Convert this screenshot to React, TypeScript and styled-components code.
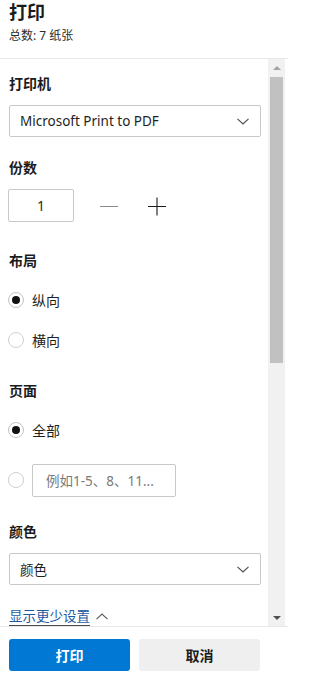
import React from 'react';
import styled, { createGlobalStyle } from 'styled-components';

const GlobalStyle = createGlobalStyle`
  html, body {
    margin: 0;
    padding: 0;
    background: #ffffff;
  }
  body {
    font-family: "Noto Sans", "Noto Sans CJK SC", sans-serif;
    color: #1b1b1b;
  }
  * {
    box-sizing: border-box;
  }
`;

const ChevronDown = () => (
  <svg width="12" height="7" viewBox="0 0 12 7" fill="none">
    <path d="M0.5 0.8 L6 6 L11.5 0.8" stroke="#4a4a4a" strokeWidth="1.1" />
  </svg>
);

const ChevronUp = () => (
  <svg width="12" height="7" viewBox="0 0 12 7" fill="none">
    <path d="M0.5 6.2 L6 1 L11.5 6.2" stroke="#5a5a5a" strokeWidth="1.1" />
  </svg>
);

const MinusIcon = () => (
  <svg width="20" height="20" viewBox="0 0 20 20" fill="none">
    <path d="M1 10.5 H19" stroke="#8a8a8a" strokeWidth="1" />
  </svg>
);

const PlusIcon = () => (
  <svg width="20" height="20" viewBox="0 0 20 20" fill="none">
    <path d="M1 10.5 H19 M10 1.5 V19.5" stroke="#1b1b1b" strokeWidth="1.1" />
  </svg>
);

interface SectionProps {
  title: string;
  top: number;
  children: React.ReactNode;
}

const Section: React.FC<SectionProps> = ({ title, top, children }) => (
  <SectionBox $top={top}>
    <SectionLabel>{title}</SectionLabel>
    {children}
  </SectionBox>
);

const Select: React.FC<{ value: string }> = ({ value }) => (
  <SelectBox>
    <SelectText>{value}</SelectText>
    <ChevronDown />
  </SelectBox>
);

const Radio: React.FC<{ checked?: boolean }> = ({ checked }) => (
  <RadioCircle $checked={!!checked}>{checked && <RadioDot />}</RadioCircle>
);

export default function App() {
  return (
    <>
      <GlobalStyle />
      <Panel>
        <Header>
          <Title>打印</Title>
          <Subtitle>总数: 7 纸张</Subtitle>
        </Header>

        <Body>
          <Content>
            <Section title="打印机" top={15}>
              <Select value="Microsoft Print to PDF" />
            </Section>

            <Section title="份数" top={21}>
              <Stepper>
                <CountInput>1</CountInput>
                <IconButton $first>
                  <MinusIcon />
                </IconButton>
                <IconButton>
                  <PlusIcon />
                </IconButton>
              </Stepper>
            </Section>

            <Section title="布局" top={29}>
              <RadioGroup>
                <RadioRow>
                  <Radio checked />
                  <RadioText>纵向</RadioText>
                </RadioRow>
                <RadioRow>
                  <Radio />
                  <RadioText>横向</RadioText>
                </RadioRow>
              </RadioGroup>
            </Section>

            <Section title="页面" top={23}>
              <RadioGroup>
                <RadioRow>
                  <Radio checked />
                  <RadioText>全部</RadioText>
                </RadioRow>
                <RadioRow $spaced>
                  <Radio />
                  <RangeInput>例如1-5、8、11...</RangeInput>
                </RadioRow>
              </RadioGroup>
            </Section>

            <Section title="颜色" top={24}>
              <Select value="颜色" />
            </Section>

            <MoreLink>
              <LinkText>显示更少设置</LinkText>
              <ChevronUp />
            </MoreLink>
          </Content>

          <ScrollBar>
            <ScrollButton>
              <ArrowUp />
            </ScrollButton>
            <ScrollTrack>
              <ScrollThumb />
            </ScrollTrack>
            <ScrollButton>
              <ArrowDown />
            </ScrollButton>
          </ScrollBar>
        </Body>

        <Footer>
          <PrimaryButton>打印</PrimaryButton>
          <SecondaryButton>取消</SecondaryButton>
        </Footer>
      </Panel>
    </>
  );
}

const Panel = styled.div`
  width: 288px;
  height: 680px;
  display: flex;
  flex-direction: column;
  background: #ffffff;
  overflow: hidden;
`;

const Header = styled.div`
  height: 59px;
  flex-shrink: 0;
  padding-left: 9px;
  border-bottom: 1px solid #e8e8e8;
`;

const Title = styled.div`
  font-size: 18px;
  font-weight: 700;
  line-height: 24px;
`;

const Subtitle = styled.div`
  margin-top: 4px;
  font-size: 12px;
  line-height: 16px;
  color: #2b2b2b;
`;

const Body = styled.div`
  flex: 1;
  min-height: 0;
  display: flex;
  flex-direction: row;
  padding-right: 3px;
`;

const Content = styled.div`
  flex: 1;
  min-width: 0;
  overflow: hidden;
  padding: 0 7px 0 9px;
`;

const SectionBox = styled.div<{ $top: number }>`
  display: flex;
  flex-direction: column;
  gap: 11px;
  margin-top: ${({ $top }) => $top}px;
`;

const SectionLabel = styled.div`
  font-size: 14px;
  font-weight: 700;
  line-height: 20px;
`;

const SelectBox = styled.div`
  height: 32px;
  display: flex;
  align-items: center;
  justify-content: space-between;
  padding: 0 11px 0 10px;
  border: 1px solid #c9c9c9;
  border-radius: 2px;
  flex-shrink: 0;
`;

const SelectText = styled.span`
  font-size: 13.5px;
  color: #1f1f1f;
  white-space: nowrap;
`;

const Stepper = styled.div`
  display: flex;
  align-items: center;
  margin-left: -1px;
`;

const CountInput = styled.div`
  width: 66px;
  height: 33px;
  display: flex;
  align-items: center;
  justify-content: center;
  border: 1px solid #c9c9c9;
  border-radius: 2px;
  font-size: 14px;
  color: #2b2b2b;
`;

const IconButton = styled.div<{ $first?: boolean }>`
  width: 48px;
  height: 32px;
  display: flex;
  align-items: center;
  justify-content: center;
  margin-left: ${({ $first }) => ($first ? '11px' : '0')};
`;

const RadioGroup = styled.div`
  display: flex;
  flex-direction: column;
  gap: 4px;
`;

const RadioRow = styled.div<{ $spaced?: boolean }>`
  height: 36px;
  display: flex;
  align-items: center;
  gap: 8px;
  margin-top: ${({ $spaced }) => ($spaced ? '10px' : '0')};
  margin-left: -1px;
`;

const RadioCircle = styled.div<{ $checked: boolean }>`
  width: 16px;
  height: 16px;
  flex-shrink: 0;
  border-radius: 50%;
  border: 1px solid ${({ $checked }) => ($checked ? '#c4c4c4' : '#cfcfcf')};
  display: flex;
  align-items: center;
  justify-content: center;
`;

const RadioDot = styled.div`
  width: 8px;
  height: 8px;
  border-radius: 50%;
  background: #111111;
`;

const RadioText = styled.span`
  font-size: 14px;
  color: #1f1f1f;
`;

const RangeInput = styled.div`
  width: 144px;
  height: 33px;
  display: flex;
  align-items: center;
  padding-left: 13px;
  border: 1px solid #c9c9c9;
  border-radius: 2px;
  font-size: 13.5px;
  color: #7a7a7a;
  white-space: nowrap;
`;

const MoreLink = styled.div`
  margin-top: 21px;
  height: 20px;
  display: flex;
  align-items: center;
  gap: 6px;
`;

const LinkText = styled.span`
  font-size: 13.5px;
  line-height: 18px;
  color: #1d5aa0;
  border-bottom: 1px solid #4a4a4a;
`;

const ScrollBar = styled.div`
  width: 17px;
  flex-shrink: 0;
  display: flex;
  flex-direction: column;
  background: #f1f1f1;
`;

const ScrollButton = styled.div`
  height: 17px;
  display: flex;
  align-items: center;
  justify-content: center;
`;

const ArrowUp = styled.div`
  width: 0;
  height: 0;
  border-left: 4px solid transparent;
  border-right: 4px solid transparent;
  border-bottom: 4px solid #a3a3a3;
`;

const ArrowDown = styled.div`
  width: 0;
  height: 0;
  border-left: 4px solid transparent;
  border-right: 4px solid transparent;
  border-top: 4px solid #505050;
`;

const ScrollTrack = styled.div`
  flex: 1;
  padding: 1px 2px 0;
`;

const ScrollThumb = styled.div`
  height: 286px;
  background: #c1c1c1;
`;

const Footer = styled.div`
  height: 54px;
  flex-shrink: 0;
  display: grid;
  grid-template-columns: 1fr 1fr;
  gap: 9px;
  padding: 12px 28px 0 9px;
  border-top: 1px solid #e8e8e8;
  align-items: start;
`;

const BaseButton = styled.div`
  height: 32px;
  display: flex;
  align-items: center;
  justify-content: center;
  border-radius: 3px;
  font-size: 14px;
  font-weight: 700;
`;

const PrimaryButton = styled(BaseButton)`
  background: #0078d4;
  color: #ffffff;
`;

const SecondaryButton = styled(BaseButton)`
  background: #efefef;
  color: #1b1b1b;
`;
